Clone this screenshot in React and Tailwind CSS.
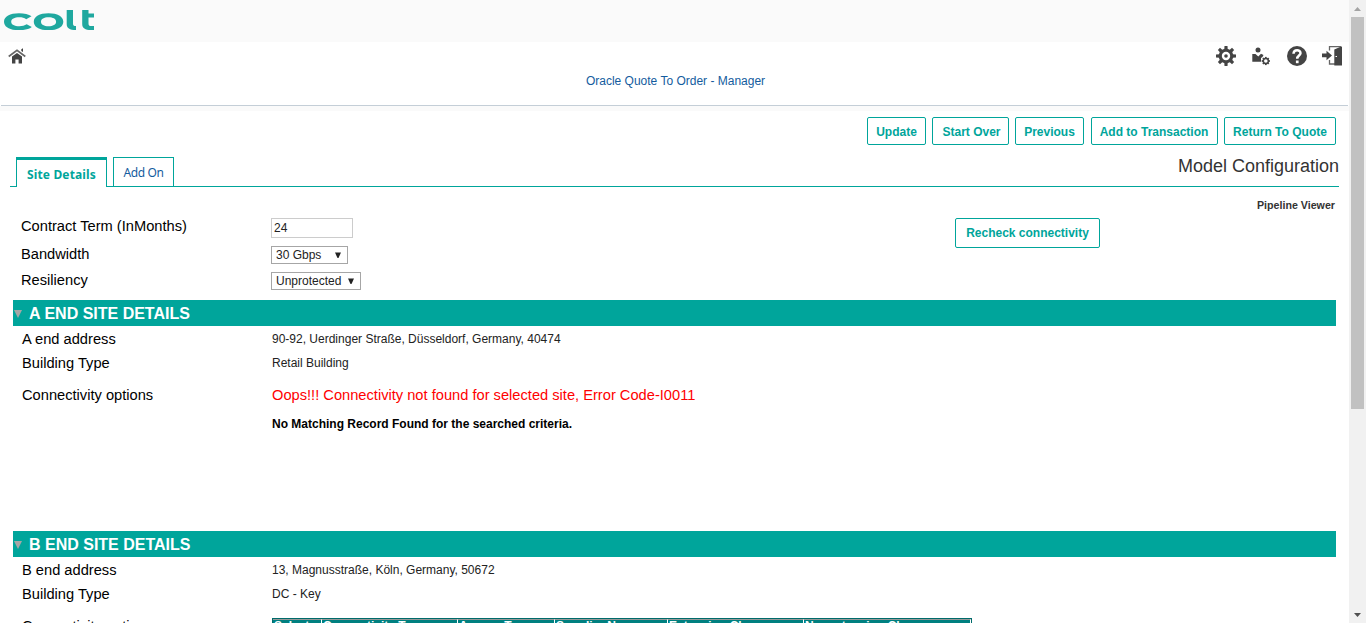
import React from "react";

const buttons = [
  ["Update", "w-[59px]"],
  ["Start Over", "w-[77px] ml-[6px] pl-[2px]"],
  ["Previous", "w-[69px] ml-[6px]"],
  ["Add to Transaction", "w-[127px] ml-[7px] pr-px"],
  ["Return To Quote", "w-[112px] ml-[6px]"],
];

const columns = [
  ["Select", "w-[49px]"],
  ["Connectivity Type", "w-[136px]"],
  ["Access Type", "w-[97px]"],
  ["Supplier Name", "w-[113px]"],
  ["Extension Class", "w-[136px]"],
  ["Nonextension Class", "w-[167px]"],
];

function Logo() {
  return (
    <svg width="90" height="20" viewBox="0 0 90 20" fill="#1fa89f" aria-label="colt">
      <path fillRule="evenodd" d="M44.500 3.300C53.500 3.300 59.300 6.500 59.300 11.700S53.500 20.200 44.500 20.200S29.800 16.900 29.800 11.700S35.500 3.300 44.500 3.300ZM44.500 7.300C40 7.300 37 8.900 37 11.700S40 16.200 44.500 16.200S52.100 14.600 52.100 11.700S49 7.300 44.500 7.300Z" />
      <path d="M27.500 6.300L22.200 9.200C20.200 7.900 18.200 7.300 15.300 7.300C10.500 7.300 7.200 8.900 7.200 11.700S10.500 16.200 15.300 16.200C18.300 16.200 20.700 15.500 22.700 14.200L27.800 17C24.700 19.300 20.400 20.200 15 20.200C6 20.200 0 16.900 0 11.700S6 3.300 15 3.300C20.400 3.300 24.700 4.300 27.500 6.300Z" />
      <path d="M62.700 0H69V13.500C69 15.500 69.700 16.100 72 16.100V20C65.600 20 62.700 18.200 62.700 14Z" />
      <path d="M78.200 0H84.500V3.600H90V7.400H84.500V13.200C84.500 15.500 85.300 16.100 87.300 16.100H90V20H87C81.200 20 78.200 18.300 78.200 14Z" />
    </svg>
  );
}

function HomeIcon() {
  return (
    <svg width="18" height="16" viewBox="0 0 18 16">
      <path d="M.7 8.500L9 2.300L17.300 8.500" fill="none" stroke="#666" strokeWidth="1.600" />
      <path d="M13.300 1.200L15 .3V4L13.300 3ZM4 8.500L9 5L14 8.500V15.500H10.600V11.500H7.400V15.500H4Z" fill="#444" />
    </svg>
  );
}

function Cog() {
  return (
    <svg width="20" height="20" viewBox="0 0 20 20">
      <g fill="#444">
        {[0, 45, 90, 135, 180, 225, 270, 315].map((a) => (
          <path key={a} d="M8.500 0H11.500L12.200 10H7.800Z" transform={`rotate(${a} 10 10)`} />
        ))}
        <circle cx="10" cy="10" r="7.300" />
      </g>
      <circle cx="10" cy="10" r="4.200" fill="#fff" />
      <circle cx="10" cy="10" r="1.800" fill="#444" />
    </svg>
  );
}

function UserCog() {
  return (
    <svg width="20" height="20" viewBox="0 0 20 20">
      <g fill="#444">
        <circle cx="7" cy="4" r="2.500" />
        <path d="M1.300 8H4.500L7.300 10.500L10 7.700L12.500 9L11.500 11L10 12V15.700H1.300Z" />
        {[0, 45, 90, 135].map((a) => (
          <path key={a} d="M13.900 10.900H15.700V19.100H13.900Z" transform={`rotate(${a} 14.8 15)`} />
        ))}
        <circle cx="14.800" cy="15" r="3.200" />
      </g>
      <circle cx="14.800" cy="15" r="1.800" fill="#fff" />
    </svg>
  );
}

function HelpIcon() {
  return (
    <svg width="20" height="20" viewBox="0 0 20 20">
      <circle cx="10" cy="10" r="10" fill="#444" />
      <path d="M6.500 7.700C6.700 3.200 13.600 3.200 13.500 7.300C13.400 9.600 10.200 9.700 10.200 12.800" fill="none" stroke="#fff" strokeWidth="2.500" />
      <path d="M8.900 14.500H11.600V17.200H8.900Z" fill="#fff" />
    </svg>
  );
}

function ExitIcon() {
  return (
    <svg width="20" height="20" viewBox="0 0 20 20">
      <path d="M7.500 4.500V.7H19.500M7.500 14V18H13" fill="none" stroke="#666" strokeWidth="1.300" />
      <path d="M12.300 3.500L18 1H20V19.500H12.300ZM0 7.500H4.500V4.700L10 9.500L4.500 14.300V11.300H0Z" fill="#444" />
      <path d="M13.500 10.500H15" stroke="#fff" />
    </svg>
  );
}

function Select({ value, className }) {
  return (
    <button className={`flex h-[18px] items-center justify-between border border-[#a6a6a6] bg-white pl-1 pr-[6px] text-xs ${className}`}>
      <span>{value}</span>
      <svg width="6" height="7" viewBox="0 0 6 7"><path d="M0 .5H6L3.500 6H2.500Z" fill="#222" /></svg>
    </button>
  );
}

function Section({ title }) {
  return (
    <h2 className="ml-[3px] mr-[3px] flex h-[26px] items-center bg-[#00a59b] pt-[2px] text-base font-bold text-white">
      <svg className="ml-px mr-[7px]" width="8" height="8" viewBox="0 0 8 8"><path d="M0 0H8L4 8Z" fill="#a6a6a6" /></svg>
      <span>{title}</span>
    </h2>
  );
}

function Field({ label, className, labelClass = "", children }) {
  return (
    <div className={`flex items-center ${className}`}>
      <div className={`w-[250px] shrink-0 text-[14.667px] text-black ${labelClass}`}>{label}</div>
      {children}
    </div>
  );
}

function Scrollbar() {
  return (
    <div className="flex h-full w-[17px] shrink-0 flex-col items-center bg-[#f1f1f1]">
      <div className="flex h-[17px] shrink-0 items-center"><svg width="7" height="4" viewBox="0 0 7 4"><path d="M0 4L3.500 0L7 4Z" fill="#a3a3a3" /></svg></div>
      <div className="h-[392px] w-[13px] shrink-0 bg-[#c1c1c1]" />
      <div className="mt-auto flex h-[17px] shrink-0 items-center"><svg width="7" height="4" viewBox="0 0 7 4"><path d="M0 0H7L3.500 4Z" fill="#505050" /></svg></div>
    </div>
  );
}

export default function App() {
  return (
    <div className="flex h-[623px] w-full overflow-hidden bg-white font-['Liberation_Sans',Arial,sans-serif] text-xs text-[#222]">
      <div className="h-full min-w-0 flex-1 overflow-hidden">
        <header className="h-[42px] bg-[#fafafa] pl-1 pt-[10px]"><Logo /></header>
        <nav className="mx-px flex h-16 flex-col border-b border-[#c4ced7]">
          <div className="flex h-[28px] items-center justify-between pl-[7px] pr-[6px]">
            <HomeIcon />
            <div className="flex"><Cog /><div className="ml-[15px] mr-4"><UserCog /></div><HelpIcon /><div className="ml-[15px]"><ExitIcon /></div></div>
          </div>
          <div className="mt-[3px] pl-[2px] text-center leading-4 text-[#145c9e]">Oracle Quote To Order - Manager</div>
        </nav>
        <div className="h-[5px] bg-[#fafafa]" />
        <main className="pl-[10px] pr-[10px] pt-[6px]">
          <div className="flex justify-end pr-[3px]">
            {buttons.map(([text, size]) => (
              <button key={text} className={`h-[28px] whitespace-nowrap rounded-[2px] border border-[#00a59b] pt-[2px] font-bold text-[#00a59b] ${size}`}>{text}</button>
            ))}
          </div>
          <div className="mt-3 flex h-[30px]">
            <div className="w-[6px] border-b border-[#00a59b]" />
            <div className="flex w-[91px] items-center justify-center border-x border-t-[3px] border-[#00a59b] pt-[2px] font-['Noto_Sans',sans-serif] font-bold tracking-[0.15px] text-[#00a59b]"><span>Site Details</span></div>
            <div className="w-[6px] border-b border-[#00a59b]" />
            <div className="flex w-[61px] items-center justify-center border border-[#00a59b] pt-[2px] font-['Noto_Sans',sans-serif] tracking-[-0.4px] text-[#145c9e]">Add On</div>
            <div className="flex-1 border-b border-[#00a59b] text-right text-lg leading-[18px] text-[#333]">Model Configuration</div>
          </div>
          <div className="flex h-[113px] justify-between">
            <div className="pt-7">
              <div className="flex h-[26px] pl-[11px]">
                <div className="w-[250px] text-[14.667px] leading-[22px] text-black">Contract Term (InMonths)</div>
                <input className="mt-[3px] h-5 w-[82px] border border-[#ccc] px-[2px] text-[#222]" defaultValue="24" />
              </div>
              <Field label="Bandwidth" className="h-[28px] pl-[11px]"><Select value="30 Gbps" className="w-[77px]" /></Field>
              <Field label="Resiliency" className="h-[24px] pl-[11px]"><Select value="Unprotected" className="w-[90px]" /></Field>
            </div>
            <div className="flex w-[384px] justify-between pr-1">
              <button className="mt-[31px] h-[30px] w-[145px] rounded-[2px] border border-[#00a59b] font-bold text-[#00a59b]">Recheck connectivity</button>
              <div className="mt-[11px] text-[10.667px] font-bold leading-[14px] text-[#333]">Pipeline Viewer</div>
            </div>
          </div>
          <Section title="A END SITE DETAILS" />
          <Field label="A end address" labelClass="pt-[2px]" className="h-[26px] pl-3">90-92, Uerdinger Straße, Düsseldorf, Germany, 40474</Field>
          <Field label="Building Type" labelClass="pt-[2px]" className="h-[22px] pl-3">Retail Building</Field>
          <Field label="Connectivity options" labelClass="pt-[2px]" className="h-[42px] pl-3"><span className="pt-[2px] text-[14.667px] text-[#f00]">Oops!!! Connectivity not found for selected site, Error Code-I0011</span></Field>
          <div className="h-[115px] pl-[262px] font-bold leading-4 text-black">No Matching Record Found for the searched criteria.</div>
          <Section title="B END SITE DETAILS" />
          <Field label="B end address" labelClass="pt-[2px]" className="h-[26px] pl-3">13, Magnusstraße, Köln, Germany, 50672</Field>
          <Field label="Building Type" labelClass="pt-[2px]" className="h-[22px] pl-3">DC - Key</Field>
          <div className="flex pl-3 pt-[13px]">
            <div className="w-[250px] shrink-0 text-[14.667px] leading-[16px] text-black">Connectivity options</div>
            <div className="flex h-6 w-[700px] border border-[#006b6b]">
              {columns.map(([text, size]) => (
                <div key={text} className={`shrink-0 whitespace-nowrap border-r border-t border-r-white border-t-[#999] bg-[#008080] pl-px text-xs font-bold leading-[12px] text-white ${size}`}>{text}</div>
              ))}
            </div>
          </div>
        </main>
      </div>
      <Scrollbar />
    </div>
  );
}
